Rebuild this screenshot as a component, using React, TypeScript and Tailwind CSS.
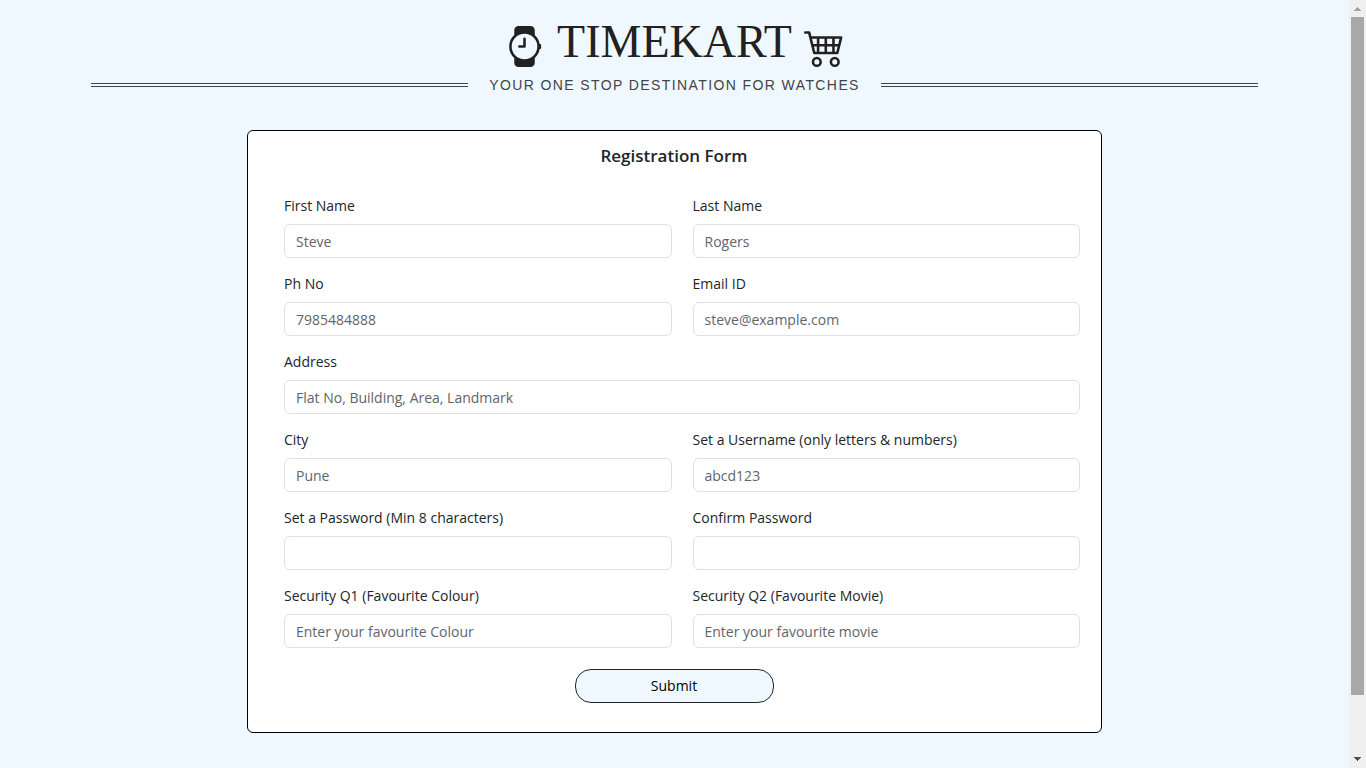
import { BsCart4, BsWatch } from "react-icons/bs";

type FieldProps = {
  id: string;
  label: string;
  placeholder?: string;
  type?: string;
  wide?: boolean;
};

const fields: FieldProps[] = [
  { id: "first-name", label: "First Name", placeholder: "Steve" },
  { id: "last-name", label: "Last Name", placeholder: "Rogers" },
  { id: "phone", label: "Ph No", placeholder: "7985484888", type: "tel" },
  { id: "email", label: "Email ID", placeholder: "steve@example.com", type: "email" },
  { id: "address", label: "Address", placeholder: "Flat No, Building, Area, Landmark", wide: true },
  { id: "city", label: "City", placeholder: "Pune" },
  { id: "username", label: "Set a Username (only letters & numbers)", placeholder: "abcd123" },
  { id: "password", label: "Set a Password (Min 8 characters)", type: "password" },
  { id: "confirm-password", label: "Confirm Password", type: "password" },
  { id: "colour", label: "Security Q1 (Favourite Colour)", placeholder: "Enter your favourite Colour" },
  { id: "movie", label: "Security Q2 (Favourite Movie)", placeholder: "Enter your favourite movie" },
];

function Field({ id, label, placeholder, type = "text", wide }: FieldProps) {
  return (
    <div className={wide ? "col-span-2 flex flex-col gap-2" : "flex flex-col gap-2"}>
      <label htmlFor={id} className="text-sm leading-5 text-[#212529]">
        {label}
      </label>
      <input
        id={id}
        name={id}
        type={type}
        placeholder={placeholder}
        className="h-[34px] w-full rounded-md border border-[#dee2e6] bg-white px-[11px] text-sm text-[#212529] placeholder:text-[#5f656b]"
      />
    </div>
  );
}

function Header() {
  return (
    <header className="flex flex-col px-[91px] pt-[15px] text-[#212121]">
      <div className="flex h-[52px] items-end justify-center">
        <BsWatch className="size-[41px]" aria-hidden="true" />
        <h1 className="mx-3 self-start font-['Liberation_Serif',serif] text-[46px] leading-[54px]">
          TIMEKART
        </h1>
        <BsCart4 className="size-[41px]" aria-hidden="true" />
      </div>
      <div className="mt-2 flex items-center gap-[21px]">
        <div className="h-1 flex-1 border-y border-[#444]" />
        <p className="font-['Liberation_Sans',sans-serif] text-sm leading-5 tracking-widest text-[#444]">
          YOUR ONE STOP DESTINATION FOR WATCHES
        </p>
        <div className="h-1 flex-1 border-y border-[#444]" />
      </div>
    </header>
  );
}

function Scrollbar() {
  return (
    <div
      className="sticky top-0 flex h-screen w-[17px] shrink-0 flex-col items-center bg-[#f0f0f0]"
      aria-hidden="true"
    >
      <svg className="h-[17px] w-[17px] shrink-0" viewBox="0 0 17 17" fill="#a3a3a3">
        <path d="M8 7h1v1h1v1h1v1h1v1H5v-1h1V9h1V8h1z" />
      </svg>
      <div className="flex w-[13px] flex-1 flex-col">
        <div className="h-[92.4%] bg-[#a8a8a8]" />
      </div>
      <svg className="h-[17px] w-[17px] shrink-0" viewBox="0 0 17 17" fill="#505050">
        <path d="M5 6h7v1h-1v1h-1v1H9v1H8V9H7V8H6V7H5z" />
      </svg>
    </div>
  );
}

export default function App() {
  return (
    <div className="flex min-h-screen bg-[#f0f8ff] font-['Open_Sans','Noto_Sans',sans-serif]">
      <div className="flex min-w-0 flex-1 flex-col">
        <Header />
        <main className="px-4 pt-[35px] pb-8">
          <form
            className="mx-auto flex w-full max-w-[855px] flex-col rounded-md border border-black bg-white pt-[11px] pr-[21px] pb-[29px] pl-9"
            onSubmit={(event) => event.preventDefault()}
          >
            <h2 className="mr-4 text-center text-[17px] leading-7 font-semibold text-[#212529]">
              Registration Form
            </h2>
            <div className="mt-[26px] grid grid-cols-2 gap-x-[21px] gap-y-4">
              {fields.map((field) => (
                <Field key={field.id} {...field} />
              ))}
            </div>
            <div className="mt-[21px] mr-4 flex justify-center">
              <button
                type="submit"
                className="h-[34px] w-[199px] rounded-2xl border border-[#212529] bg-[#f0f8ff] text-sm text-black"
              >
                Submit
              </button>
            </div>
          </form>
        </main>
      </div>
      <Scrollbar />
    </div>
  );
}
